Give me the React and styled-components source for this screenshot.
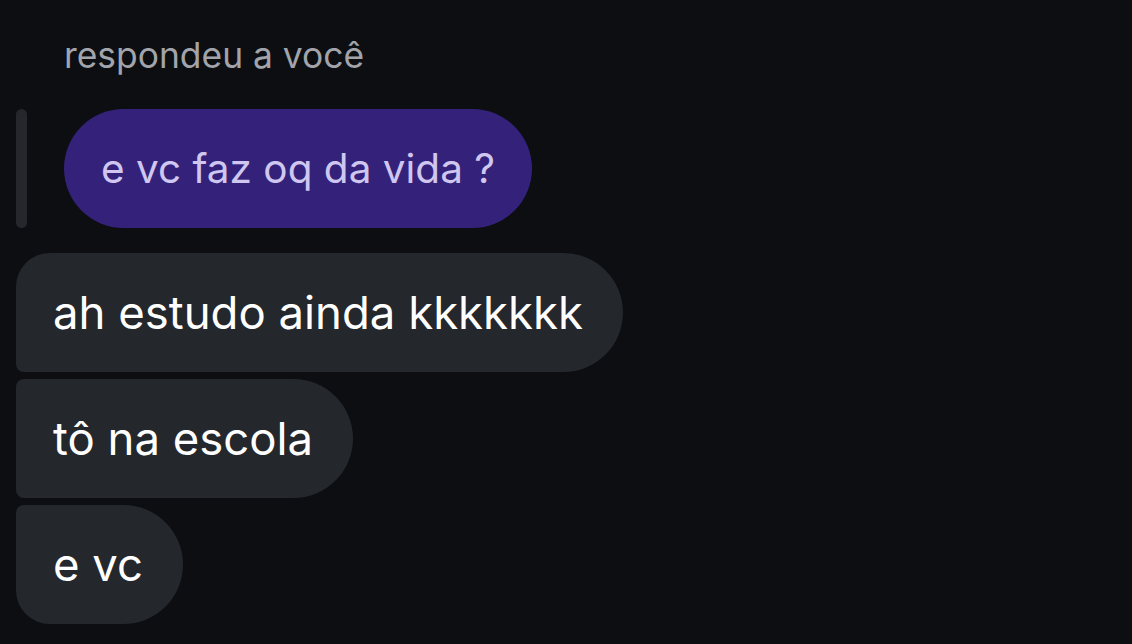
import React from "react";
import styled, { createGlobalStyle } from "styled-components";

const Global = createGlobalStyle`
  html, body { margin: 0; padding: 0; background: #0c0e12; }
  body { font-family: Inter, "Noto Sans", sans-serif; -webkit-font-smoothing: antialiased; }
`;

const Page = styled.div`
  width: 1132px;
  height: 644px;
  background: #0c0e12;
  box-sizing: border-box;
  padding: 0 16px;
  overflow: hidden;
  display: flex;
  flex-direction: column;
`;

const ReplyLabel = styled.div`
  margin: 36px 0 0 48px;
  height: 40px;
  line-height: 40px;
  font-size: 35.4px;
  color: #a2a4ab;
`;

const ReplyRow = styled.div`
  display: flex;
  align-items: stretch;
  gap: 37px;
  margin-top: 33px;
`;

const ReplyBar = styled.div`
  width: 11px;
  border-radius: 6px;
  background: #25272c;
`;

const QuotedBubble = styled.div`
  height: 119px;
  padding: 0 37px;
  border-radius: 60px;
  background: #34227a;
  color: #cfc7ef;
  font-size: 40.5px;
  display: flex;
  align-items: center;
`;

const Group = styled.div`
  display: flex;
  flex-direction: column;
  align-items: flex-start;
  gap: 7px;
  margin-top: 25px;
`;

const radii = {
  first: "34px 60px 60px 8px",
  middle: "8px 60px 60px 8px",
  last: "8px 60px 60px 34px",
};

const Bubble = styled.div`
  height: 119px;
  padding: 0 40px 0 37px;
  border-radius: ${(p) => radii[p.$pos]};
  background: #24272c;
  color: #ffffff;
  font-size: 45.5px;
  display: flex;
  align-items: center;
  box-sizing: border-box;
`;

export default function App() {
  return (
    <Page>
      <Global />
      <ReplyLabel>respondeu a você</ReplyLabel>
      <ReplyRow>
        <ReplyBar />
        <QuotedBubble>e vc faz oq da vida ?</QuotedBubble>
      </ReplyRow>
      <Group>
        <Bubble $pos="first">ah estudo ainda kkkkkkk</Bubble>
        <Bubble $pos="middle">tô na escola</Bubble>
        <Bubble $pos="last">e vc</Bubble>
      </Group>
    </Page>
  );
}
